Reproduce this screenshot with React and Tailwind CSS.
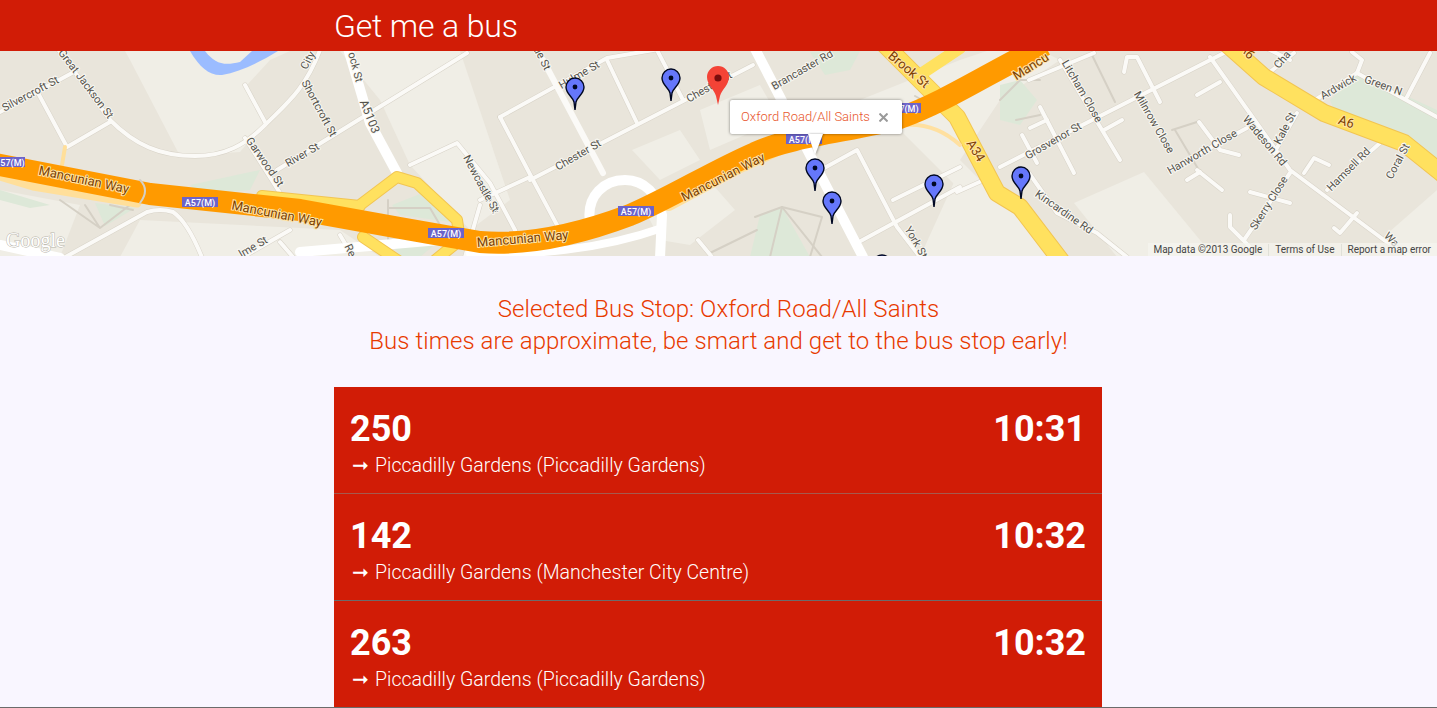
const thinRoads = [
  "M0 112L72 73","M55 45L110 120","M38 93L67 147L110 122","M110 120C135 145 160 156 195 156C225 156 245 145 265 125C285 105 305 90 320 50",
  "M245 85L265 122","M277 170L467 53","M245 138L280 193","M410 165L457 143L490 183L515 230","M60 260L147 212Q160 208 173 212Q188 222 203 260","M243 257L290 230","M280 242L293 257","M340 235L353 257",
  "M500 117L607 58L665 48","M500 117L533 180L557 225","M607 60L637 123","M657 50L683 100","M530 180L753 65","M480 200L530 177","M465 257L480 205",
  "M817 172L857 150L897 227L920 257","M857 243L960 187","M893 200L960 167","M698 240L712 257",
  "M1000 167L1224 53","M1029 80L1094 53","M1060 60L1120 160","M1104 130L1122 120","M1040 107L1074 173","M1030 128L1047 120","M1022 135L1037 163",
  "M1124 72L1127 57L1137 57L1160 102","M1197 95L1220 82","M1210 57L1290 170L1384 240L1412 257","M1169 170L1247 128","M1199 122L1220 150L1239 155","M1197 170L1222 190","M1187 180L1200 172",
  "M1327 190L1380 143","M1274 153L1297 113","M1244 240L1290 173","M1230 215L1230 227L1250 247","M1250 192L1290 203","M1304 173L1314 158L1329 165","M1334 228L1340 233L1357 213",
  "M1315 100L1357 73L1437 117","M1352 52L1362 60L1357 73","M1270 72L1294 53","M1407 97L1430 53","M1029 173L1057 213L1097 233L1127 257","M957 192L984 180","M1260 45L1290 60",
];
const midRoads = ["M543 60L603 173"];
const thickRoads = ["M347 45L370 123L397 173","M753 45L863 257","M0 245L60 258","M300 252L440 240"];
const parkPaths = ["M755 217L782 207L822 217L810 257","M782 207L770 257","M782 207L822 257","M710 253L757 230","M85 205L100 228L130 205M100 228L60 200","M110 205L133 210","M388 200L388 240L440 240","M388 208L430 208L440 225","M915 96L940 110","M1000 100L1020 80L1040 80","M1016 120L1040 115","M1172 130L1197 122M1175 130L1200 172","M1091 53L1115 102"];
const labels = [
  ["Silvercroft St",32,97,-28],["Great Jackson St",83,86,53],["Garwood St",262,164,55],["River St",304,158,-30],["Shortcroft St",316,110,62],["City",311,62,-62],["ock St",352,68,75],["Newcastle St",478,186,62],
  ["Hulme St",581,78,-30],["Chester St",580,158,-30],["Chester St",711,90,-30],["Brancaster Rd",804,73,-30],["York St",913,244,60],["lme St",255,250,-30],["Re",347,252,65],["tle St",487,202,60],["ue St",539,60,63],
  ["Litcham Close",1079,93,60],["Grosvenor St",1055,144,-30],["Milnrow Close",1151,124,60],["Hanworth Close",1204,155,-30],["Wadeson Rd",1262,143,50],["Kale St",1288,130,-62],["Ardwick",1340,90,-30],["Green N",1382,89,20],["Hamsell Rd",1351,172,-45],["Coral St",1401,163,-62],["Skerry Close",1272,205,-58],["Kincardine Rd",1062,215,35],["Wa",1389,242,45],["Cha",1285,62,-50],
];
const roadLabels = [
  ["Mancunian Way",83,184,12],["Mancunian Way",276,218,11],["Mancunian Way",523,243,-5],["Mancunian Way",725,181,-27],["Mancu",1033,70,-32],["Brook St",906,73,40],["A34",972,153,58],["A6",1345,126,18],["A6",1244,54,50],
];
const shields = [[0,157,25],[182,197,36],[428,228,36],[618,206,36],[786,134,36],[897,103,24]];
const bluePins = [[575,110],[671,101],[815,191],[832,224],[934,207],[1021,199],[882,287]];

function MapDrawing() {
  return (
    <svg viewBox="0 51 1437 205" className="block w-full h-full" style={{fontFamily:"Roboto, sans-serif"}}>
      <rect x="0" y="51" width="1437" height="205" fill="#e9e5db" />
      <g fill="#f0eee6">
        <path d="M125 51L185 51L290 51L270 60L247 85L265 122L240 152L180 156L130 60Z" />
        <path d="M340 51L460 51L510 200L470 230L410 165L380 100Z" />
        <path d="M140 220L340 230L380 257L120 257Z" />
        <path d="M0 190L80 205L60 257L0 257Z" />
        <path d="M632 150L680 130L700 160L660 180Z" />
        <path d="M700 110L760 85L780 120L710 150Z" />
        <path d="M640 200L700 170L735 210L690 245L660 240Z" />
        <path d="M1074 203L1144 172L1214 257L1117 257Z" />
        <path d="M860 100L960 60L1020 40L1060 60L1000 100L960 160L1000 200L1070 257L1030 257L960 190L900 130Z" />
        <path d="M1380 240L1437 190L1437 257L1412 257Z" />
        <path d="M955 180L1000 215L1040 257L920 257Z" />
      </g>
      <g fill="#dde8d8">
        <path d="M1330 100L1357 73L1437 110L1437 163L1407 140L1334 110Z" />
        <path d="M760 215L782 207L810 257L750 257Z" />
        <path d="M810 52L860 51L850 70L825 75Z" />
        <path d="M392 205L430 190L450 222L400 215Z" />
        <path d="M0 190L50 205L30 208L0 200Z" />
        <path d="M95 203L135 208L105 226Z" />
        <path d="M1000 85L1020 80L1037 100L1020 125L1000 120Z" />
        <path d="M390 240L440 240L420 257L400 257Z" />
        <path d="M190 185L260 170L250 190L200 195Z" />
      </g>
      <path d="M190 51C200 68 210 76 222 75C240 72 260 62 278 51Z" fill="#9bbcff" />
      <path d="M205 51C215 64 224 66 240 62L252 51Z" fill="#f0eee6" />
      <g fill="none" strokeLinecap="round" strokeLinejoin="round">
        <g stroke="#d5d0c5" strokeWidth="2">{parkPaths.map((d, i) => <path key={i} d={d} />)}</g>
        <g stroke="#d8d3c8" strokeWidth="5">{thinRoads.map((d, i) => <path key={i} d={d} />)}</g>
        <g stroke="#fbfaf7" strokeWidth="4">{thinRoads.map((d, i) => <path key={i} d={d} />)}</g>
        <g stroke="#fbfaf7" strokeWidth="6">{midRoads.map((d, i) => <path key={i} d={d} />)}</g>
        <g stroke="#ffffff" strokeWidth="10">{thickRoads.map((d, i) => <path key={i} d={d} />)}</g>
        <path d="M590 222C586 195 605 180 625 180C645 180 658 195 662 215L660 258" stroke="#ffffff" strokeWidth="10" />
        <path d="M470 253C530 256 600 250 662 228" stroke="#ffffff" strokeWidth="8" />
        <path d="M262 196L360 206M360 205L397 177L417 183L457 220L460 240L433 262M363 237L400 262" stroke="#f2c552" strokeWidth="12" />
        <path d="M262 196L360 206M360 205L397 177L417 183L457 220L460 240L433 262M363 237L400 262" stroke="#ffe15f" strokeWidth="10" />
        <path d="M0 176L33 186L137 203" stroke="#ffdf9a" strokeWidth="9" />
        <path d="M885 45L920 80L957 117L997 193L1020 207L1062 262" stroke="#f2c552" strokeWidth="18" />
        <path d="M885 45L920 80L957 117L997 193L1020 207L1062 262" stroke="#ffe15f" strokeWidth="16" />
        <path d="M915 78L960 48" stroke="#ffe15f" strokeWidth="12" />
        <path d="M1228 45L1264 77L1324 113L1404 143L1445 176" stroke="#f2c552" strokeWidth="18" />
        <path d="M1228 45L1264 77L1324 113L1404 143L1445 176" stroke="#ffe15f" strokeWidth="16" />
        <path d="M65 147L62 165" stroke="#ffdf9a" strokeWidth="4" />
        <path d="M668 201L735 165L790 140" stroke="#ffdf9a" strokeWidth="20" />
        <path d="M903 125Q935 122 960 145" stroke="#ffe0a0" strokeWidth="4" />
        <path d="M-5 164L150 194L300 210L400 228L480 242C530 246 585 232 630 215C670 198 715 170 755 153C790 136 860 130 900 118C945 102 985 75 1045 45" stroke="#ff9a00" strokeWidth="22" strokeLinecap="butt" />
        <path d="M140 180Q150 190 140 203" stroke="#d5d0c5" strokeWidth="2" />
      </g>
      <g>
        {labels.map(([t, x, y, a], i) => (
          <text key={i} x={x} y={y} transform={`rotate(${a} ${x} ${y})`} textAnchor="middle" fontSize="11" fill="#55534c" stroke="#f8f7f2" strokeWidth="2" paintOrder="stroke">{t}</text>
        ))}
        <text x="366" y="118" transform="rotate(68 366 118)" textAnchor="middle" fontSize="12" fill="#55534c" stroke="#f8f7f2" strokeWidth="2" paintOrder="stroke">A5103</text>
        {roadLabels.map(([t, x, y, a], i) => (
          <text key={i} x={x} y={y} transform={`rotate(${a} ${x} ${y})`} textAnchor="middle" fontSize="13" fill="#7c3f00" stroke="#ffe4a8" strokeWidth="2" paintOrder="stroke">{t}</text>
        ))}
        {shields.map(([x, y, w], i) => (
          <g key={i}>
            <rect x={x} y={y} width={w} height="10" fill="#6c63c9" />
            <text x={x + w / 2} y={y + 8.5} textAnchor="middle" fontSize="9" fontWeight="500" fill="#ffffff">{w === 36 ? "A57(M)" : w === 25 ? "57(M)" : "7(M)"}</text>
          </g>
        ))}
        <text x="6" y="247" fontSize="20" fontFamily="Liberation Serif, serif" fill="#ffffff" stroke="#b8b5ab" strokeWidth="1" paintOrder="stroke">Google</text>
      </g>
      {bluePins.map(([x, y], i) => (
        <g key={i}>
          <path d={`M${x} ${y}L${x - 1} ${y - 8}C${x - 2} ${y - 13} ${x - 9} ${y - 16} ${x - 9} ${y - 23}A9 9 0 0 1 ${x + 9} ${y - 23}C${x + 9} ${y - 16} ${x + 2} ${y - 13} ${x + 1} ${y - 8}Z`} fill="#6577fb" stroke="#000822" strokeWidth="1.4" />
          <circle cx={x} cy={y - 23} r="2.4" fill="#000822" />
        </g>
      ))}
      <path d="M718 105L716 96C714 89 707 85 707 77A11 11 0 0 1 729 77C729 85 722 89 720 96Z" fill="#f44336" />
      <circle cx="718" cy="78" r="3.6" fill="#7a0d0d" />
    </svg>
  );
}

function Row({ num, time, dest, border }) {
  return (
    <div className={`h-[107px] px-4 pt-[20px] text-white ${border}`}>
      <div className="flex justify-between items-start text-[36px] leading-[44px] font-bold">
        <span>{num}</span>
        <span>{time}</span>
      </div>
      <div className="mt-[1px] text-[19.5px] leading-[28px] font-light">
        <span className="inline-block w-[25px] pl-[2px] font-normal">➞</span>{dest}
      </div>
    </div>
  );
}

export default function App() {
  return (
    <div className="relative h-screen overflow-hidden bg-[#f9f6ff]" style={{ fontFamily: "Roboto, sans-serif" }}>
      <header className="h-[51px] bg-[#d11c06] pl-[334px] text-[32px] leading-[52px] font-light text-white tracking-[-0.17px]">Get me a bus</header>
      <div className="relative h-[205px] overflow-hidden">
        <MapDrawing />
        <div className="absolute left-[730px] top-[49px] w-[172px] h-[34px] flex items-center justify-between pl-[11px] pr-[14px] bg-white rounded-[2px] shadow-[0_0_3px_rgba(0,0,0,0.5)]">
          <span className="text-[13px] font-light text-[#e8562c]">Oxford Road/All Saints</span>
          <svg width="9" height="9" viewBox="0 0 9 9" fill="none" stroke="#9a9a9a" strokeWidth="2"><path d="M0.5 0.5L8.5 8.5M8.5 0.5L0.5 8.5" /></svg>
        </div>
        <div className="absolute left-[808px] top-[83px] w-0 h-0 border-l-[7px] border-r-[8px] border-t-[21px] border-l-transparent border-r-transparent border-t-white drop-shadow-[1px_0_1px_rgba(0,0,0,0.35)]" />
        <div className="absolute right-0 bottom-0 h-[13px] flex items-center gap-[6px] pl-[5px] pr-[6px] pt-[1px] bg-[#f5f5f0]/70 text-[10px] leading-[12px] text-[#444]">
          <span>Map data ©2013 Google</span>
          <span className="h-full border-l border-[#e0e0d8] pl-[6px]">Terms of Use</span>
          <span className="h-full border-l border-[#e0e0d8] pl-[6px]">Report a map error</span>
        </div>
      </div>
      <div className="mt-[37px] text-center text-[24px] leading-[32px] font-light text-[#e83a00] tracking-[0.05px]">
        <p>Selected Bus Stop: Oxford Road/All Saints</p>
        <p>Bus times are approximate, be smart and get to the bus stop early!</p>
      </div>
      <div className="mt-[30px] ml-[334px] w-[768px] bg-[#d11c06]">
        <Row num="250" time="10:31" dest="Piccadilly Gardens (Piccadilly Gardens)" border="border-b border-[#a55a4e]" />
        <Row num="142" time="10:32" dest="Piccadilly Gardens (Manchester City Centre)" border="border-b border-[#6b6b6b]" />
        <Row num="263" time="10:32" dest="Piccadilly Gardens (Piccadilly Gardens)" border="" />
      </div>
      <div className="absolute bottom-0 left-0 right-0 h-px bg-[#6b6b6b]" />
    </div>
  );
}
